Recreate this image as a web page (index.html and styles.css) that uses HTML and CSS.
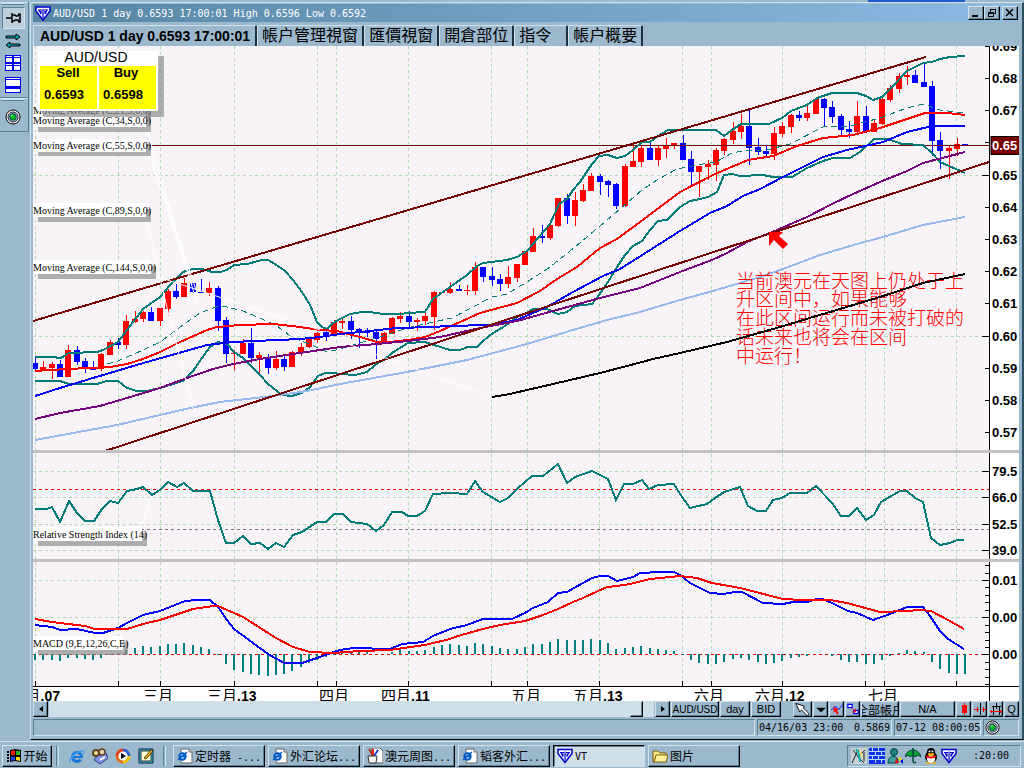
FILE: index.html
```html
<!DOCTYPE html>
<html lang="zh">
<head>
<meta charset="utf-8">
<title>AUD/USD 1 day</title>
<link rel="stylesheet" href="styles.css">
</head>
<body>
<svg class="defs" aria-hidden="true">
  <symbol id="vt" viewBox="0 0 16 15"><path d="M1 1h14v4L8 14 1 5z" fill="#fff" stroke="#0000c8" stroke-width="1.500"/><path d="M3 4h4M9 4h4M8 3v9M4 4l2 4V5M12 4l-2 4V5" fill="none" stroke="#0000c8" stroke-width="1.200"/></symbol>
  <symbol id="lamp" viewBox="0 0 16 16"><circle cx="8" cy="8" r="7" fill="#fff" stroke="#000"/><circle cx="8" cy="8" r="5" fill="#9cb8cc" stroke="#223"/><circle cx="8" cy="8" r="3.2" fill="#00c020" stroke="#044"/><path d="M6 7l2-1" stroke="#bfb"/></symbol>
  <symbol id="ie" viewBox="0 0 16 16"><circle cx="8" cy="9" r="4.5" fill="none" stroke="#1878d8" stroke-width="3"/><path d="M5 9h8" stroke="#1878d8" stroke-width="2"/><path d="M11 11h4" stroke="#9cb8cc" stroke-width="1.5"/><path d="M1 14C0 10 9 2 14 3c2 1 0 3 0 3" fill="none" stroke="#40a0f0" stroke-width="1.5"/></symbol>
  <symbol id="iedoc" viewBox="0 0 16 16"><path d="M4 1h8l3 3v11H4z" fill="#fff" stroke="#666"/><path d="M12 1v3h3" fill="#ddd" stroke="#666"/><circle cx="5.500" cy="8.500" r="3.200" fill="#cfe4ff" stroke="#0058c8" stroke-width="2"/><path d="M3 8.500h6M1 12L10 4" stroke="#0058c8" stroke-width="1.500"/></symbol>
</svg>
<div class="desktop">
  <div class="app">
    <nav class="sidebar">
      <div class="tools">
        <i class="grip"></i>
        <button class="tool pressed" aria-label="Pin"><svg viewBox="0 0 16 16"><path d="M1 8h6M7 3v10M7 5h3l1 1h2l1-2h1v8h-1l-1-2h-3l-1 1H7" fill="none" stroke="#000" stroke-width="1.500"/></svg></button>
        <button class="tool" aria-label="Switch"><svg viewBox="0 0 16 16"><path d="M1 3h10V1l4 3-4 3V5H1z" fill="#00a8b8" stroke="#000"/><path d="M15 11H5V9l-4 3 4 3v-2h10z" fill="#00a8b8" stroke="#000"/></svg></button>
        <button class="tool" aria-label="Tile"><svg viewBox="0 0 16 16" shape-rendering="crispEdges"><path d="M0 0h16v16H0z" fill="#0000f0"/><path d="M1 3h6v4H1zM9 3h6v4H9zM1 11h6v4H1zM9 11h6v4H9zM1 1h6v1H1zM9 1h6v1H9zM1 9h6v1H1zM9 9h6v1H9z" fill="#fff"/></svg></button>
        <button class="tool" aria-label="Stack"><svg viewBox="0 0 16 16" shape-rendering="crispEdges"><path d="M0 0h16v16H0z" fill="#0000f0"/><path d="M1 3h14v6H1zM1 12h14v3H1zM1 1h14v1H1z" fill="#fff"/></svg></button>
      </div>
      <div class="tools">
        <i class="grip"></i>
        <button class="tool" aria-label="Connection"><svg><use href="#lamp"/></svg></button>
      </div>
    </nav>
    <main class="window">
      <header class="titlebar">
        <svg class="logo"><use href="#vt"/></svg>
        <span class="title">AUD/USD 1 day 0.6593 17:00:01 High 0.6596 Low 0.6592</span>
        <button class="wbtn" aria-label="Minimize"><svg viewBox="0 0 10 10"><path d="M1 8h6" stroke="#000" stroke-width="2"/></svg></button>
        <button class="wbtn" aria-label="Restore"><svg viewBox="0 0 10 10" shape-rendering="crispEdges"><path d="M3 1h6v1H3zM3 2h1v2H3zM8 2h1v4H8zM7 5h1v1H7zM1 4h6v2H1zM1 6h1v3H1zM6 6h1v3H6zM1 8h5v1H1z"/></svg></button>
        <button class="wbtn close" aria-label="Close"><svg viewBox="0 0 10 10"><path d="M1 1l7 7M8 1L1 8" stroke="#000" stroke-width="1.500"/></svg></button>
      </header>
      <div class="tabs" role="tablist">
        <button class="tab current" role="tab">AUD/USD 1 day 0.6593 17:00:01</button>
        <button class="tab" role="tab">帳戶管理視窗</button>
        <button class="tab" role="tab">匯價視窗</button>
        <button class="tab" role="tab">開倉部位</button>
        <button class="tab orders" role="tab">指令</button>
        <button class="tab" role="tab">帳戶概要</button>
      </div>
      <div class="chart">
        <svg viewBox="33 46 986 655" role="img" aria-label="AUD/USD">
          <rect class="plot" x="33" y="46" width="956" height="640"/>
          <g class="crisp">
            <path class="grid" id="vgrid"/>
            <path class="grid" d="M33 175.500H985M33 336.500H985M33 471.500H985M33 497.500H985M33 524.500H985M33 550.500H985M33 580.500H985M33 617.500H985"/>
            <path class="level high" d="M33 489.500H989"/>
            <path class="level mid" d="M33 529.500H989"/>
            <path class="level high" d="M33 654.500H989"/>
            <path class="quote-glow" d="M147 144.500H989"/>
            <path class="wick up" id="upWicks"/>
            <path class="body up" id="upBodies"/>
            <path class="wick down" id="downWicks"/>
            <path class="body down" id="downBodies"/>
            <path class="histogram" id="histogram"/>
            <path class="quote-line" d="M147 145.500H989"/>
            <polyline class="curve mid-band" points="107,364 118,361 143,350 160,342 183,325 200,313 218,306 227,307 243,311 260,318 277,326 293,338 310,344 327,352 340,349 360,343 383,336 407,328 433,322 452,318 473,307 492,297 507,294 527,282 550,267 575,247 600,226 627,203 642,190 657,180 677,169 697,165 716,162 732,153 747,150 767,150 790,144 823,127 850,126 880,118 907,108 923,104 940,110 965,113"/>
            <polyline class="curve band" points="35,357 52,357 61,358 69,353 97,352 103,350 118,342 127,330 143,309 160,297 170,285 183,272 193,269 202,269 212,272 220,272 227,270 234,265 247,264 262,260 268,260 275,264 285,271 293,280 302,292 310,305 317,322 322,327 327,329 333,323 340,319 350,314 362,312 370,312 383,314 400,314 408,313 425,312 433,299 450,287 467,275 477,266 483,263 507,260 517,257 527,251 550,224 555,213 559,204 567,199 573,190 580,182 592,164 599,156 608,155 617,158 625,156 633,150 642,142 650,142 658,136 668,130 680,130 716,130 724,136 732,130 741,124 769,124 782,118 791,111 807,105 817,98 832,93 857,93 866,96 873,100 882,97 893,86 907,71 923,63 932,62 940,59 950,57 965,56"/>
            <polyline class="curve band" points="35,381 60,381 69,384 97,384 107,381 118,381 127,388 137,391 147,391 160,388 183,381 193,371 202,358 210,347 218,342 227,344 234,352 243,358 260,375 268,384 282,395 292,396 302,393 310,387 318,376 325,373 333,373 340,374 355,375 367,372 375,365 385,359 392,353 408,343 425,342 437,346 450,350 460,350 468,347 477,347 483,341 493,333 500,329 508,324 517,317 527,313 533,309 547,309 558,314 567,312 575,306 592,304 599,295 608,282 617,267 625,255 633,246 642,241 650,230 658,221 667,220 680,207 690,201 700,199 708,197 717,192 724,175 732,174 740,176 763,175 773,177 792,177 807,168 823,161 833,158 850,158 860,152 874,139 888,139 902,144 923,145 932,153 940,162 965,173"/>
            <polyline class="curve ma34" points="35,371 50,370 87,368 110,367 127,364 143,359 160,352 180,342 207,330 217,327 240,325 273,324 300,327 320,330 337,331 360,337 377,342 390,342 408,340 425,337 440,331 480,313 517,303 540,291 557,279 577,267 600,248 617,239 640,222 680,192 715,174 748,160 773,156 797,146 823,138 853,135 880,128 925,113 947,113 965,115"/>
            <polyline class="curve ma55" points="35,396 60,388 93,378 140,364 207,345 233,342 300,339 320,337 340,334 370,331 397,328 433,327 447,326 490,325 517,320 533,313 547,307 573,292 603,276 620,269 647,252 680,231 710,213 727,206 743,196 760,189 783,177 823,157 847,150 883,142 907,132 932,126 965,126"/>
            <polyline class="curve ma89" points="35,419 60,413 100,406 157,389 187,378 213,369 233,364 260,359 293,354 340,347 377,344 408,341 440,337 480,328 517,321 553,311 600,298 640,288 680,272 712,260 727,253 747,242 777,230 807,217 832,204 853,194 880,182 907,171 923,163 965,152"/>
            <polyline class="curve ma144" points="35,440 117,425 160,415 190,408 220,402 273,396 307,391 340,384 407,372 467,360 527,344 573,330 607,320 640,312 680,300 713,291 760,277 783,269 820,255 857,244 883,237 923,225 965,217"/>
            <path class="curve trend" d="M33 321L926 57M105 451L989 162"/>
          </g>
          <path class="leader" d="M146 126L192 285M148 150L198 305M150 150L196 290M152 165L190 272M146 218L168 312L193 408M152 275L320 330M345 343L491 397M142 525L151 496M119 629L123 637"/>
          <path class="arrow" d="M769 232h14l-4 4 9 8-5 5-9-9-5 6z"/>
          <g class="note">
            <text x="736" y="288">当前澳元在天图上仍处于上</text>
            <text x="736" y="306">升区间中，如果能够</text>
            <text x="736" y="325">在此区间运行而未被打破的</text>
            <text x="736" y="344">话未来也将会在区间</text>
            <text x="736" y="363">中运行！</text>
          </g>
          <g class="crisp">
            <polyline class="curve long" points="492,397 510,394 527,390 553,384 600,373 627,366 653,359 680,353 727,342 780,327 813,317 880,297 923,283 965,274"/>
            <polyline class="curve band" points="35,509 47,509 52,507 60,522 69,501 77,513 85,521 94,521 102,509 110,501 118,503 127,491 137,489 143,487 152,495 160,490 168,482 177,487 184,483 193,491 210,491 218,520 226,543 234,543 243,536 251,544 260,543 268,549 276,543 284,547 293,535 302,532 317,522 326,522 334,514 343,514 351,522 367,524 376,531 384,525 392,512 402,512 408,516 417,516 425,511 433,494 450,493 467,494 475,481 483,492 500,502 508,498 518,488 532,476 543,476 558,464 567,483 575,477 592,471 608,479 616,500 624,484 633,484 642,480 649,489 658,485 674,484 680,494 690,508 707,504 715,498 724,492 740,487 748,506 757,511 766,511 773,500 782,498 790,493 807,493 816,486 832,503 841,516 849,516 857,508 866,520 874,515 881,502 900,491 907,491 915,498 923,502 931,538 940,545 950,543 957,540 964,540"/>
            <polyline class="curve ma55" points="35,625 52,627 60,630 77,629 95,633 103,633 118,628 127,623 143,615 160,611 185,601 197,600 210,600 218,607 227,620 234,629 268,654 284,663 302,663 317,658 334,652 340,650 353,648 390,649 402,644 423,642 433,636 450,629 467,625 483,619 512,619 525,613 533,608 548,602 558,593 567,592 583,583 592,578 600,576 608,576 617,581 633,577 640,573 660,572 674,572 680,575 690,583 710,593 723,594 735,592 742,592 763,603 783,604 793,602 807,602 817,599 823,599 832,603 848,611 857,613 873,620 890,614 907,607 923,607 930,616 940,631 948,639 964,649"/>
            <polyline class="curve ma34" points="35,619 52,622 60,623 85,626 95,629 127,629 143,624 160,620 193,609 213,606 218,606 243,617 276,638 293,647 310,652 334,653 360,651 390,650 425,645 450,639 458,636 483,629 500,625 525,621 543,615 558,609 573,602 583,598 598,591 607,587 617,586 630,584 650,579 680,576 697,578 712,583 740,588 783,599 803,600 830,600 847,603 880,612 907,611 920,610 931,611 948,620 964,629"/>
            <rect class="side" x="989" y="46" width="30" height="655"/>
            <path class="axis" d="M989.500 46V701M33 686.500H1019"/>
            <path class="axis" d="M985 46.500h4M985 78.500h4M985 110.500h4M985 142.500h4M982 175.500h7M985 207.500h4M985 239.500h4M985 271.500h4M985 303.500h4M982 336.500h7M985 368.500h4M985 400.500h4M985 432.500h4M982 471.500h7M982 497.500h7M982 524.500h7M982 550.500h7M982 580.500h7M982 617.500h7M982 654.500h7M985 565.500h4M985 573.500h4M985 587.500h4M985 595.500h4M985 602.500h4M985 610.500h4M985 625.500h4M985 632.500h4M985 640.500h4M985 647.500h4M985 662.500h4M985 669.500h4M985 677.500h4M985 684.500h4"/>
            <path class="axis" id="dateTicks"/>
            <path class="divider" d="M33 451.500H1019M33 560.500H1019"/>
          </g>
          <g class="scale">
            <text x="992" y="51">0.69</text><text x="992" y="83">0.68</text><text x="992" y="115">0.67</text><text x="992" y="180">0.65</text><text x="992" y="212">0.64</text><text x="992" y="244">0.63</text><text x="992" y="276">0.62</text><text x="992" y="308">0.61</text><text x="992" y="341">0.60</text><text x="992" y="373">0.59</text><text x="992" y="405">0.58</text><text x="992" y="437">0.57</text>
            <text x="992" y="476">79.5</text><text x="992" y="502">66.0</text><text x="992" y="529">52.5</text><text x="992" y="555">39.0</text>
            <text x="992" y="585">0.01</text><text x="992" y="622">0.00</text><text x="992" y="659">0.00</text>
            <rect class="last-box" x="991" y="136.500" width="29" height="18"/>
            <text class="last" x="992" y="150">0.65</text>
          </g>
          <rect class="side" x="33" y="687" width="956" height="14"/>
          <g class="dates">
            <text x="60" y="701" text-anchor="end">月<tspan>.07</tspan></text><text x="143" y="701">三月</text><text x="207" y="701">三月<tspan>.13</tspan></text><text x="319" y="701">四月</text><text x="381" y="701">四月<tspan>.11</tspan></text><text x="511" y="701">五月</text><text x="573" y="701">五月<tspan>.13</tspan></text><text x="694" y="701">六月</text><text x="755" y="701">六月<tspan>.12</tspan></text><text x="868" y="701">七月</text>
          </g>
          <g class="tag">
            <rect class="shadow" x="38" y="109" width="113" height="12"/><rect class="paper" x="33" y="104" width="113" height="12"/><text x="33" y="114">Moving Average (C,21,S,0,0)</text>
            <rect class="shadow" x="38" y="120" width="113" height="12"/><rect class="paper" x="33" y="115" width="113" height="12"/><text x="33" y="124">Moving Average (C,34,S,0,0)</text>
            <rect class="shadow" x="38" y="144" width="113" height="12"/><rect class="paper" x="33" y="139" width="113" height="13"/><text x="33" y="149">Moving Average (C,55,S,0,0)</text>
            <rect class="shadow" x="38" y="209" width="113" height="13"/><rect class="paper" x="33" y="203" width="113" height="14"/><text x="33" y="214">Moving Average (C,89,S,0,0)</text>
            <rect class="shadow" x="38" y="266" width="118" height="13"/><rect class="paper" x="33" y="260" width="118" height="14"/><text x="33" y="271">Moving Average (C,144,S,0,0)</text>
            <rect class="shadow" x="38" y="533" width="109" height="13"/><rect class="paper" x="33" y="527" width="109" height="14"/><text x="33" y="538">Relative Strength Index (14)</text>
            <rect class="shadow" x="38" y="642" width="90" height="13"/><rect class="paper" x="33" y="636" width="90" height="14"/><text x="33" y="647">MACD (9,E,12,26,C,E)</text>
          </g>
          <g class="ticket">
            <rect class="shadow" x="43" y="56" width="121" height="61"/>
            <rect class="paper" x="38" y="51" width="120" height="60"/>
            <rect class="price" x="40" y="66" width="57" height="43"/><rect class="price" x="99" y="66" width="57" height="43"/>
            <text class="pair" x="96" y="62">AUD/USD</text>
            <text x="68" y="77">Sell</text><text x="126" y="77">Buy</text>
            <text x="64" y="99">0.6593</text><text x="123" y="99">0.6598</text>
          </g>
        </svg>
      </div>
      <div class="toolbar">
        <button class="btn sq" aria-label="Scroll left"><svg viewBox="0 0 8 8"><path d="M6 1v6L2 4z"/></svg></button>
        <div class="track"><i class="btn thumb"></i></div>
        <button class="btn sq" aria-label="Scroll right"><svg viewBox="0 0 8 8"><path d="M2 1v6l4-3z"/></svg></button>
        <button class="btn pairbtn">AUD/USD</button>
        <button class="btn dayname">day</button>
        <button class="btn side-btn">BID</button>
        <i class="space"></i>
        <button class="btn pointer" aria-label="Pointer"><svg viewBox="0 0 18 13"><path d="M2 0l9 3-1 2 6 6-2 2-6-6-2 2z" fill="#fff" stroke="#000"/></svg></button>
        <button class="btn sq" aria-label="Pointer menu"><svg viewBox="0 0 10 10"><path d="M1 4h8L5 8z"/></svg></button>
        <button class="btn sq" aria-label="Trend line"><svg viewBox="0 0 14 13"><path d="M0 8l5-5 4 4 5-6" fill="none" stroke="#00f"/><path d="M3 4l6 3-2 1 2 4-2 1-2-4-2 2z" fill="red"/></svg></button>
        <button class="btn sq" aria-label="Link objects"><svg viewBox="0 0 14 13"><path d="M1 1h5v4H1zM8 8h5v4H8z" fill="#fff" stroke="#00f" stroke-width="1.500"/><path d="M5 5l5 5M10 6v4H6" fill="none" stroke="red"/></svg></button>
        <button class="btn accounts"><span>全部帳戶</span></button>
        <button class="btn na">N/A</button>
        <button class="btn sq" aria-label="Candles"><svg viewBox="0 0 12 12" shape-rendering="crispEdges"><path d="M6 0h1v12H6zM4 2h5v8H4z" fill="red"/></svg></button>
        <button class="btn sq" aria-label="Narrow"><svg viewBox="0 0 12 12" shape-rendering="crispEdges"><path d="M6 0h1v12H6z"/><path d="M0 6h5v1H0zM8 6h4v1H8zM3 4h1v5H3zM9 4h1v5H9z" fill="red"/></svg></button>
        <button class="btn sq" aria-label="Widen"><svg viewBox="0 0 12 12" shape-rendering="crispEdges"><path d="M6 0h1v6H6zM2 3h9v1H2zM3 4h1v8H3zM9 4h1v8H9z"/><path d="M0 8h12v1H0zM1 7h1v3H1zM10 7h1v3h-1z" fill="red"/></svg></button>
        <button class="btn sq">Q</button>
      </div>
      <footer class="status">
        <span class="cell grow"></span>
        <span class="cell reading"><span>04/16/03 23:00</span><span>0.5869</span></span>
        <span class="cell clock">07-12 08:00:05</span>
        <span class="cell lamp"><svg><use href="#lamp"/></svg></span>
      </footer>
      <i class="peek"></i>
    </main>
  </div>
  <footer class="taskbar">
    <button class="btn start"><svg viewBox="0 0 16 16"><path d="M1 4h2M1 7h2M1 10h2M1 13h2" stroke="#000" stroke-width="2"/><path d="M4 2l5-1 6 1v12l-6-1-5 1z" fill="#000"/><path d="M5 3l4-1v5H5z" fill="#f02000"/><path d="M10 3h4v4h-4z" fill="#20b020"/><path d="M5 9h4v3l-4 1z" fill="#2040f0"/><path d="M10 9h4v4l-4-1z" fill="#f8e000"/></svg>开始</button>
    <i class="bar"></i>
    <div class="quick">
      <a href="#" aria-label="Internet Explorer"><svg><use href="#ie"/></svg></a>
      <a href="#" aria-label="Viewer"><svg viewBox="0 0 16 16"><path d="M5 8l9-3 2 5-8 6-6-4z" fill="#8090e8" stroke="#304080"/><circle cx="4" cy="5" r="3" fill="#f0e0a0" stroke="#604020" stroke-width="2"/><circle cx="10" cy="4" r="3" fill="#e8d8b0" stroke="#604020" stroke-width="1.500"/><path d="M8 12l5-3" stroke="#fff" stroke-width="2"/></svg></a>
      <a href="#" aria-label="Media Player"><svg viewBox="0 0 16 16"><circle cx="8" cy="8" r="6" fill="#fff"/><path d="M2 8a6 6 0 0 1 6-6" fill="none" stroke="#e84018" stroke-width="3"/><path d="M8 2a6 6 0 0 1 6 6" fill="none" stroke="#3060d0" stroke-width="3"/><path d="M14 8a6 6 0 0 1-6 6" fill="none" stroke="#f0c000" stroke-width="3"/><path d="M8 14a6 6 0 0 1-6-6" fill="none" stroke="#e07020" stroke-width="3"/><path d="M6 5v6l5-3z"/></svg></a>
      <a href="#" aria-label="Show desktop"><svg viewBox="0 0 16 16"><path d="M1 1h14v14H1z" fill="#40b8d0" stroke="#024"/><path d="M3 3h10v10H3z" fill="#ffffd8" stroke="#333"/><path d="M6 10l7-8 2 1-7 8z" fill="#f8c020" stroke="#530"/></svg></a>
    </div>
    <i class="bar"></i>
    <div class="tasks">
      <button class="btn task"><svg><use href="#iedoc"/></svg><span>定时器<small> -...</small></span></button>
      <button class="btn task"><svg><use href="#iedoc"/></svg><span>外汇论坛<small>...</small></span></button>
      <button class="btn task"><svg viewBox="0 0 16 16"><path d="M5 0h8l3 3v12H5z" fill="#fff" stroke="#555"/><path d="M2 1l4 7" stroke="#a04020" stroke-width="2"/><path d="M6 1v7" stroke="#f02020" stroke-width="2"/><path d="M11 2L7 8" stroke="#2040e0" stroke-width="2"/><path d="M1 8h9l-1 7H2z" fill="#f4f4f4" stroke="#333"/></svg><span>澳元周图<small>...</small></span></button>
      <button class="btn task"><svg><use href="#iedoc"/></svg><span>韬客外汇<small>...</small></span></button>
      <button class="btn task active"><svg><use href="#vt"/></svg><span><small>VT</small></span></button>
      <button class="btn task"><svg viewBox="0 0 16 16"><path d="M1 3h5l2 2h6v3H4l-2 6H1z" fill="#f8e890" stroke="#806000"/><path d="M4 7h12l-2 7H2z" fill="#fff0a0" stroke="#806000"/></svg><span>图片</span></button>
    </div>
    <div class="tray">
      <svg viewBox="0 0 16 16"><path d="M0 0h16v16H0z" fill="#c8d0d0"/><path d="M1 15L7 2l1 6 6-6M2 2l6 8 5 5M13 4v9" fill="none" stroke="#222"/><path d="M5 1l3 5 1 8" fill="none" stroke="#10b0b0" stroke-width="2"/><path d="M9 3l2 6" stroke="#f0e060" stroke-width="2"/></svg>
      <svg viewBox="0 0 16 16"><path d="M0 0h16v16H0z" fill="#1030f0"/><path d="M0 3.500h16M0 7.500h16M0 11.500h16M3.500 0v3M9.500 0v3M6.500 4v3M12.500 4v3M3.500 8v3M9.500 8v3M6.500 12v3M12.500 12v3" stroke="#c0d8f8"/></svg>
      <svg viewBox="0 0 16 16"><circle cx="7" cy="4" r="3.500" fill="#208080" stroke="#044"/><path d="M1 15c0-5 3-7 6-7l4 3v4z" fill="#40a0a0" stroke="#044"/><path d="M9 10l3 5H8z" fill="red"/><path d="M11 9l5 2-3 3z" fill="#f8e000"/><path d="M13 13l3-2v5z" fill="#00f"/></svg>
      <svg viewBox="0 0 16 16"><path d="M0 9c1-5 5-7 8-7s7 2 8 7l-3-2-3 2-2-2-3 2-2-2z" fill="#08a030" stroke="#043"/><path d="M8 0v13q1 3 3 1" fill="none" stroke="#043" stroke-width="1.500"/></svg>
      <svg viewBox="0 0 16 16"><ellipse cx="8" cy="9" rx="6" ry="6"/><circle cx="8" cy="4" r="4"/><ellipse cx="8" cy="11" rx="4" ry="4" fill="#fff"/><circle cx="6.500" cy="3.500" r="1" fill="#fff"/><circle cx="9.500" cy="3.500" r="1" fill="#fff"/><path d="M5 6h6L8 7.500zM3 15h4M9 15h4" fill="#f8b000" stroke="#f8b000" stroke-width="1.500"/><path d="M3 8q5 3 10 0" fill="none" stroke="red" stroke-width="2"/></svg>
      <svg><use href="#vt"/></svg>
      <time>:20:00</time>
    </div>
  </footer>
</div>
<script src="chart.js"></script>
</body>
</html>
```
FILE: styles.css
```css
* { box-sizing: border-box; }
body { margin: 0; background: #9cb8cc; font-family: "Liberation Sans", "Noto Sans CJK TC", sans-serif; color: #000; }
button { margin: 0; padding: 0; font: inherit; color: inherit; background: #9cb8cc; border: 0; border-radius: 0; }
.defs { position: absolute; width: 0; height: 0; }
.desktop { display: flex; flex-direction: column; height: 100vh; }
.app { display: flex; flex: 1; min-height: 0; }

.sidebar { width: 30px; flex: none; padding-top: 2px; }
.tools { display: flex; flex-direction: column; align-items: center; gap: 2px; width: 29px; padding: 1px 2px 2px 0; border-right: 1px solid #5a8294; border-bottom: 1px solid #5a8294; box-shadow: inset 0 1px #d0e2ec; }
.tools + .tools { padding-bottom: 4px; }
.grip { width: 22px; height: 2px; background: #d0e2ec; border-bottom: 1px solid #5a8294; }
.tools + .tools .grip { margin-bottom: 4px; }
.tool { display: flex; align-items: center; justify-content: center; width: 23px; height: 20px; }
.tool svg { width: 16px; height: 16px; }
.pressed { height: 22px; background: #bccfda; border: 1px solid; border-color: #5a8294 #d0e2ec #d0e2ec #5a8294; }

.window { display: flex; flex-direction: column; flex: 1; min-width: 0; margin: 2px 0 1px; padding: 1px 3px 3px 2px; border-style: solid; border-width: 1px 2px 1px 1px; border-color: #d0e2ec #2c5060 #000 #d0e2ec; }
.titlebar { display: flex; align-items: center; height: 18px; flex: none; padding: 0 1px 0 2px; background: linear-gradient(90deg, #5685a3, #8cbbe4); color: #fff; }
.logo { width: 16px; height: 15px; margin-right: 2px; }
.title { flex: 1; font: 10px "DejaVu Sans Mono", monospace; white-space: nowrap; }
.wbtn, .btn { border: 1px solid; border-color: #d0e2ec #000 #000 #d0e2ec; box-shadow: inset -1px -1px #5a8294; }
.wbtn { display: flex; align-items: center; justify-content: center; width: 16px; height: 14px; }
.wbtn svg { width: 10px; height: 10px; }
.close { margin-left: 2px; }

.tabs { display: flex; height: 23px; flex: none; margin-top: 1px; padding-top: 2px; }
.tab { padding: 0 4px; border: solid; border-width: 1px 2px 0 1px; border-color: #d0e2ec #1c3040 #1c3040 #d0e2ec; border-radius: 2px 2px 0 0; font-size: 16px; line-height: 20px; white-space: nowrap; }
.tab.current { padding: 0 5px 0 6px; font-size: 14px; font-weight: bold; line-height: 16px; }
.tab.orders { padding-right: 15px; }

.chart { flex: 1; min-height: 0; background: #fff; }
.chart svg { display: block; width: 100%; height: 100%; }
.crisp { shape-rendering: crispEdges; }
.plot { fill: #f7f3f7; }
.side { fill: #fff; }
.grid { fill: none; stroke: #b4d8b4; stroke-dasharray: 3 3; }
.level { stroke-dasharray: 3 3; }
.high { stroke: #e00000; }
.mid { stroke: #807080; }
.quote-glow { stroke: #e0f4f0; }
.quote-line { stroke: #780000; }
.wick { stroke-width: 1; fill: none; }
.body { stroke-width: 6; fill: none; }
.up { stroke: #f00; }
.down { stroke: #00f; }
.histogram { stroke: #008080; stroke-width: 2; }
.curve { fill: none; stroke-width: 2; }
.band { stroke: #007c78; }
.mid-band { stroke: #007c78; stroke-width: 1; stroke-dasharray: 6 4; }
.ma34 { stroke: #f00; }
.ma55 { stroke: #00f; }
.ma89 { stroke: #780080; }
.ma144 { stroke: #98b8f0; }
.long { stroke: #000; }
.trend { stroke: #780000; }
.leader { fill: none; stroke: #fff; }
.arrow { fill: #f00; }
.note { fill: #f00; font: 19px "Noto Sans CJK SC", sans-serif; font-weight: 300; }
.axis { stroke: #000; fill: none; }
.divider { stroke: #c4c0c4; stroke-width: 3; }
.scale { font-size: 13px; font-weight: bold; }
.last-box { fill: #780000; stroke: #000; }
.last { fill: #fff; }
.dates { font-size: 15px; }
.dates tspan { font-size: 14px; font-weight: bold; }
.tag { font: 10px "Liberation Serif", serif; }
.shadow { fill: #888; fill-opacity: .65; }
.paper { fill: #fff; }
.price { fill: #ff0; }
.ticket { font-size: 13px; font-weight: bold; text-anchor: middle; }
.pair { font-size: 14px; font-weight: normal; }

.toolbar { display: flex; height: 16px; flex: none; gap: 1px; font-size: 11px; }
.btn { display: flex; align-items: center; justify-content: center; overflow: hidden; white-space: nowrap; }
.sq { width: 15px; flex: none; }
.sq svg { width: 12px; height: 12px; flex: none; }
.sq:first-child svg, .track + .sq svg { width: 8px; height: 8px; }
.track { display: flex; justify-content: flex-end; flex: 1; padding-right: 11px; background: #cfdfe8; }
.thumb { width: 13px; }
.pairbtn { width: 48px; font-size: 10px; }
.dayname, .side-btn { width: 30px; }
.space { width: 10px; }
.pointer { width: 19px; }
.pointer svg { width: 18px; height: 13px; }
.accounts { width: 38px; font-size: 12px; }
.na { width: 55px; }

.status { display: flex; gap: 2px; height: 17px; flex: none; margin-top: 2px; font: 10px "DejaVu Sans Mono", monospace; }
.cell { display: flex; align-items: center; justify-content: space-between; padding: 0 1px; border: 1px solid; border-color: #5a8294 #d0e2ec #d0e2ec #5a8294; white-space: nowrap; }
.grow { flex: 1; }
.reading { width: 135px; }
.clock { width: 87px; }
.lamp { width: 36px; }
.lamp svg { width: 15px; height: 15px; }
.peek { position: absolute; top: 0; right: 59px; width: 97px; height: 2px; background: #2058d0; }

.taskbar { display: flex; align-items: center; height: 27px; flex: none; padding: 1px 3px 0 2px; border-top: 1px solid #d0e2ec; font: 12px "DejaVu Sans Mono", "Noto Sans CJK SC", monospace; }
.start { gap: 1px; width: 50px; height: 22px; }
.start svg, .task svg, .tray svg, .quick svg { display: block; width: 16px; height: 16px; flex: none; }
.bar { width: 3px; height: 20px; margin: 0 7px 0 4px; border-left: 1px solid #5a8294; border-right: 1px solid #d0e2ec; }
.quick { display: flex; gap: 7px; width: 93px; padding-left: 3px; }
.tasks { display: flex; flex: 1; gap: 3px; min-width: 0; }
.task { justify-content: flex-start; gap: 2px; width: 92px; height: 22px; padding-left: 3px; }
.task span { white-space: pre; }
.task small { font-size: 10px; }
.active { background: #cfdfe8; border-color: #000 #d0e2ec #d0e2ec #000; box-shadow: inset 1px 1px #5a8294; }
.tray { display: flex; align-items: center; gap: 2px; width: 174px; height: 22px; padding-left: 3px; border: 1px solid; border-color: #5a8294 #d0e2ec #d0e2ec #5a8294; }
.tray time { margin-left: 14px; font-size: 10px; }
```
FILE: chart.js
```js
// One entry per day: direction, wick top, wick bottom, body top, body bottom.
const candles = `
d358,370,363,369 u361,370,367,370 u362,379,364,368 d360,377,364,377 u345,377,350,377 d346,365,350,362 d358,373,361,369 d361,370,368,370
u353,371,354,369 u340,355,342,355 d338,349,342,345 u315,349,321,345 u311,323,319,322 u311,322,312,319 d307,321,312,321 u308,326,308,321
u289,316,291,309 d284,299,291,297 u278,297,283,297 d282,293,283,292 d279,293,292,293 u282,296,288,293 d286,331,288,321 d317,363,320,354
u350,370,353,354 u339,354,343,354 d328,363,343,358 u352,374,355,358 d354,374,358,368 u351,370,359,368 d355,371,359,367 u351,367,352,367
u343,356,347,352 u338,348,339,347 u332,343,333,340 d330,341,332,335 u320,335,322,334 u317,329,321,323 d316,339,321,330 d328,349,329,333
d328,337,331,333 d330,359,332,339 u332,343,333,342 u317,334,318,334 u312,323,316,319 d311,327,316,322 u318,331,320,322 u313,325,316,321
u291,330,292,317 u292,293,292,293 u282,294,289,293 d285,291,289,291 u285,295,290,291 u262,295,267,291 d267,282,267,277 d267,286,276,280
d274,291,279,284 u266,288,277,284 u264,282,264,278 u251,265,251,265 u228,252,236,252 d225,243,236,238 u223,240,225,238 u198,227,198,226
d194,224,198,216 u192,226,200,216 u184,202,190,201 u173,191,176,191 d174,195,176,182 d180,197,181,185 d183,209,184,206 u164,207,166,206
u145,167,161,167 u145,167,148,162 d143,160,148,160 u146,166,148,160 u138,158,146,149 u143,149,143,146 d135,160,143,160 d151,185,159,172
u166,197,166,172 u160,180,164,167 u148,181,150,165 u138,155,139,151 u122,144,131,140 u114,139,126,132 d110,165,126,148 d138,155,147,152
d145,157,151,154 u127,160,133,154 u122,137,126,134 u114,133,115,127 d111,121,115,118 u105,121,113,118 u99,114,99,114 d98,127,99,108
d101,123,107,117 d114,136,116,130 d121,138,129,132 u101,133,116,132 d106,132,116,131 u119,132,123,132 u97,125,99,124 u85,102,88,100
u73,93,76,89 u66,85,75,77 d70,83,75,83 d64,87,82,87 d81,156,86,141 d132,169,140,151 u145,179,148,151 u138,156,144,149 d144,145,144,145
`.trim().split(/\s+/);

// MACD minus signal, in chart units above or below the zero line.
const spread = [
  -6, -6, -6, -7, -4, -4, -5, -6, -4, -1, 0, 4, 6, 8, 7, 8, 10, 10, 11, 9, 7, 5, -1, -10, -16, -18, -20, -21, -22, -21, -20, -17, -13, -9, -6, -3, -1,
  2, 2, 3, 3, 0, 0, 2, 5, 3, 3, 4, 7, 9, 10, 9, 8, 11, 10, 8, 6, 5, 5, 7, 10, 10, 12, 15, 14, 14, 14, 15, 14, 11, 5, 6, 7, 8, 6, 5, 4, 3,
  -1, -6, -9, -10, -10, -8, -5, -4, -6, -8, -10, -9, -7, -4, -3, -2, 0, 0, -2, -6, -8, -8, -10, -10, -6, -2, 1, 4, 3, 2, -8, -15, -19, -20, -20
];

const dates = [35, 118, 160, 234, 317, 336, 408, 491, 527, 599, 682, 711, 782, 865, 884, 956];

const dayX = i => Math.round(35 + i * 8.305);
const draw = (id, d) => document.getElementById(id).setAttribute('d', d);

const paths = { uw: '', ub: '', dw: '', db: '' };
candles.forEach((entry, i) => {
  const [high, low, top, bottom] = entry.slice(1).split(',').map(Number);
  paths[entry[0] + 'w'] += `M${dayX(i) + 0.5} ${high}V${low}`;
  paths[entry[0] + 'b'] += `M${dayX(i)} ${top}V${bottom}`;
});
draw('upWicks', paths.uw);
draw('upBodies', paths.ub);
draw('downWicks', paths.dw);
draw('downBodies', paths.db);
draw('histogram', spread.map((v, i) => `M${dayX(i)} 654v${-v}`).join(''));
draw('vgrid', dates.map(x => `M${x + 0.5} 46V686`).join(''));
draw('dateTicks', dates.map(x => `M${x + 0.5} 681v5`).join(''));
```
